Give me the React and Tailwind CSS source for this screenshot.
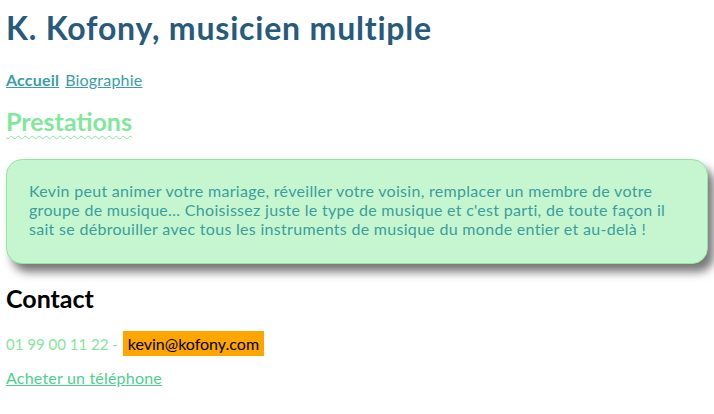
import React from 'react'

export default function App() {
  return (
    <div className="min-h-[414px] bg-white px-[6px] pt-[8px] font-['Lato','Liberation_Sans',sans-serif]">
      <h1 className="text-[32px] leading-[40px] font-bold tracking-[0.8px] text-[#275a7c]">K. Kofony, musicien multiple</h1>

      <nav className="mt-[22px] flex gap-[6px] text-[16px] leading-[20px] tracking-[0.2px] text-[#3a9ea5]">
        <a href="#" className="font-bold underline">Accueil</a>
        <a href="#" className="underline">Biographie</a>
      </nav>

      <h2 className="mt-[16px] text-[25px] leading-[30px] font-bold text-[#7fe89a] underline decoration-wavy decoration-1 underline-offset-4">
        Prestations
      </h2>

      <div className="mt-[23px] rounded-[16px] border border-[#90e6a4] bg-[#c6f6cf] pt-[21px] pb-[25px] pl-[22px] pr-[20px] text-[16px] leading-[19px] tracking-[0.3px] text-[#3a9e9e] shadow-[6px_8px_10px_#777]">
        <p>
          Kevin peut animer votre mariage, réveiller votre voisin, remplacer un membre de votre
          <br />
          groupe de musique… Choisissez juste le type de musique et c'est parti, de toute façon il
          <br />
          sait se débrouiller avec tous les instruments de musique du monde entier et au-delà !
        </p>
      </div>

      <h2 className="mt-[19px] text-[25px] leading-[30px] font-bold text-black">Contact</h2>

      <p className="mt-[18px] flex items-center text-[15px] leading-[20px]">
        <span className="text-[#7fe89a]">01 99 00 11 22 -</span>
        <span className="ml-[5px] flex h-[25px] items-center bg-[#ffa500] px-[5px] text-[16px] text-black">kevin@kofony.com</span>
      </p>

      <a href="#" className="mt-[12px] block text-[16px] leading-[20px] tracking-[0.2px] text-[#4ccf8f] underline">
        Acheter un téléphone
      </a>
    </div>
  )
}
